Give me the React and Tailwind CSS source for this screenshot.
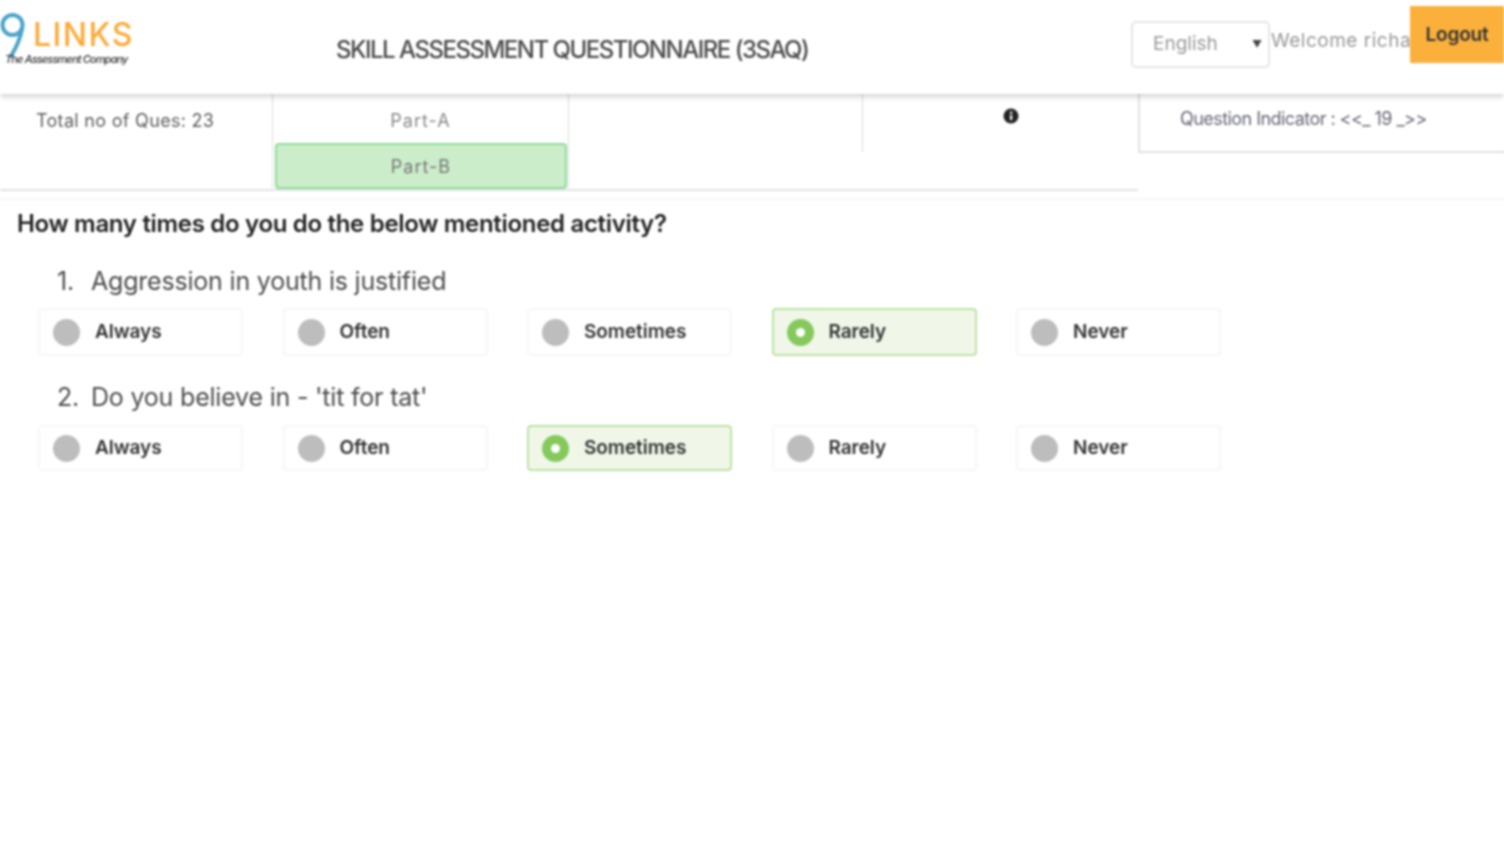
import React from 'react';

const options = ['Always', 'Often', 'Sometimes', 'Rarely', 'Never'];

const questions = [
  { num: '1.', text: 'Aggression in youth is justified', answer: 'Rarely', rowClass: 'h-[48px] mt-[8px]' },
  { num: '2.', text: "Do you believe in - 'tit for tat'", answer: 'Sometimes', rowClass: 'h-[46px] mt-[9px]' },
];

function Logo() {
  return (
    <div className="relative w-[336px] h-[94px] shrink-0">
      <svg className="absolute left-0 top-[12px]" width="28" height="50" viewBox="0 0 28 50" fill="none">
        <circle cx="12.5" cy="13" r="10" stroke="#4ba3c7" strokeWidth="4" />
        <path d="M22 17 C20 28 16 36 11 44" stroke="#4ba3c7" strokeWidth="4" strokeLinecap="round" />
      </svg>
      <span className="absolute left-[33px] top-[15px] text-[32px] leading-[40px] font-medium text-[#fbab3a] tracking-[1.5px]">
        LINKS
      </span>
      <span className="absolute left-[5px] top-[53px] text-[11px] leading-[13px] italic font-medium text-[#333] tracking-[-0.85px] whitespace-nowrap">
        The Assessment Company
      </span>
    </div>
  );
}

function Header() {
  return (
    <header className="relative z-10 flex h-[94px] shadow-[0_2px_6px_rgba(0,0,0,0.22)] bg-white">
      <Logo />
      <h1 className="w-[795px] shrink-0 pt-[31px] text-[24px] leading-[38px] font-medium text-[#4a4a4a] tracking-[-1.5px] whitespace-nowrap">
        SKILL ASSESSMENT QUESTIONNAIRE (3SAQ)
      </h1>
      <div className="w-[139px] h-[47px] mt-[21px] shrink-0 flex items-center justify-between pl-[20px] pr-[6px] border-2 border-[#e6e6e6] rounded-[5px] text-[#999] text-[19px]">
        <span>English</span>
        <span className="text-[10px] text-[#444]">▼</span>
      </div>
      <div className="w-[140px] shrink-0 overflow-hidden pt-[27px] pl-[1px] text-[19px] leading-[27px] text-[#999] whitespace-nowrap tracking-[0.5px]">
        Welcome richa
      </div>
      <div className="flex-1 h-[57px] mt-[6px] pt-[1px] flex items-center justify-center bg-[#fbb03b] text-[19px] font-semibold text-[#333] tracking-[-0.2px]">
        Logout
      </div>
    </header>
  );
}

function SummaryBar() {
  return (
    <div className="flex h-[106px] border-b-2 border-[#f6f6f6]">
      <div className="w-[1138px] h-[97px] shrink-0 flex border-b-2 border-[#e2e2e2]">
        <div className="w-[273px] h-[94px] pl-[36px] pt-[14px] text-[18px] leading-[26px] text-[#5c5c5c] border-r border-[#ddd] tracking-[0.3px]">
          Total no of Ques: 23
        </div>
        <div className="w-[296px] h-[94px] border-r border-[#ddd] text-center text-[18px] leading-[26px] text-[#888] tracking-[1px]">
          <div className="h-[49px] pt-[14px]">Part-A</div>
          <div className="ml-[2px] w-[292px] h-[46px] pt-[1px] flex items-center justify-center bg-[#cbedca] border-2 border-[#8fdc9a] rounded-[4px] text-[#777]">
            Part-B
          </div>
        </div>
        <div className="w-[294px] h-[58px] border-r border-[#ddd]" />
        <div className="flex-1 pt-[14px] flex justify-center pl-[21px]">
          <svg width="16" height="16" viewBox="0 0 16 16">
            <circle cx="8" cy="8" r="7.5" fill="#222" />
            <rect x="7" y="7" width="2.2" height="5" fill="#fff" />
            <rect x="7" y="3.6" width="2.2" height="2.2" fill="#fff" />
          </svg>
        </div>
      </div>
      <div className="flex-1 h-[59px] pl-[40px] pt-[12px] border-l-2 border-b-2 border-[#e2e2e2] text-[18px] leading-[26px] text-[#667] tracking-[-0.55px] whitespace-nowrap">
        {'Question Indicator : <<_ 19 _>>'}
      </div>
    </div>
  );
}

function OptionCard({ label, selected }) {
  return (
    <div
      className={
        selected
          ? 'flex items-center h-full pl-[13px] border-2 border-[#bde3a6] bg-[#f0f7e9] rounded-[4px]'
          : 'flex items-center h-full pl-[13px] border-2 border-[#f7f7f7] bg-white rounded-[4px]'
      }
    >
      {selected ? (
        <span className="w-[27px] h-[27px] shrink-0 rounded-full bg-[#85c95c] flex items-center justify-center">
          <span className="w-[9px] h-[9px] rounded-full bg-white" />
        </span>
      ) : (
        <span className="w-[27px] h-[27px] shrink-0 rounded-full bg-[#bdbdbd]" />
      )}
      <span className="ml-[15px] pt-[1px] text-[19px] font-semibold text-[#333] tracking-[-0.05px]">{label}</span>
    </div>
  );
}

function Question({ q }) {
  return (
    <div className="mb-[24px]">
      <div className="flex pl-[57px] h-[36px] items-center text-[25px] text-[#4d4d4d] tracking-[-0.2px]">
        <span className="w-[34px]">{q.num}</span>
        <span>{q.text}</span>
      </div>
      <div className={`grid grid-cols-5 gap-x-[39.5px] ml-[38px] w-[1183px] ${q.rowClass}`}>
        {options.map((opt) => (
          <OptionCard key={opt} label={opt} selected={opt === q.answer} />
        ))}
      </div>
    </div>
  );
}

export default function App() {
  return (
    <div className="min-h-[845px] bg-white overflow-hidden blur-[0.8px] font-['Inter','Open_Sans',sans-serif]">
      <Header />
      <SummaryBar />
      <h2 className="pl-[17px] pt-[6px] h-[64px] text-[24px] leading-[36px] font-semibold text-[#222] tracking-[-0.31px]">
        How many times do you do the below mentioned activity?
      </h2>
      {questions.map((q) => (
        <Question key={q.num} q={q} />
      ))}
    </div>
  );
}
